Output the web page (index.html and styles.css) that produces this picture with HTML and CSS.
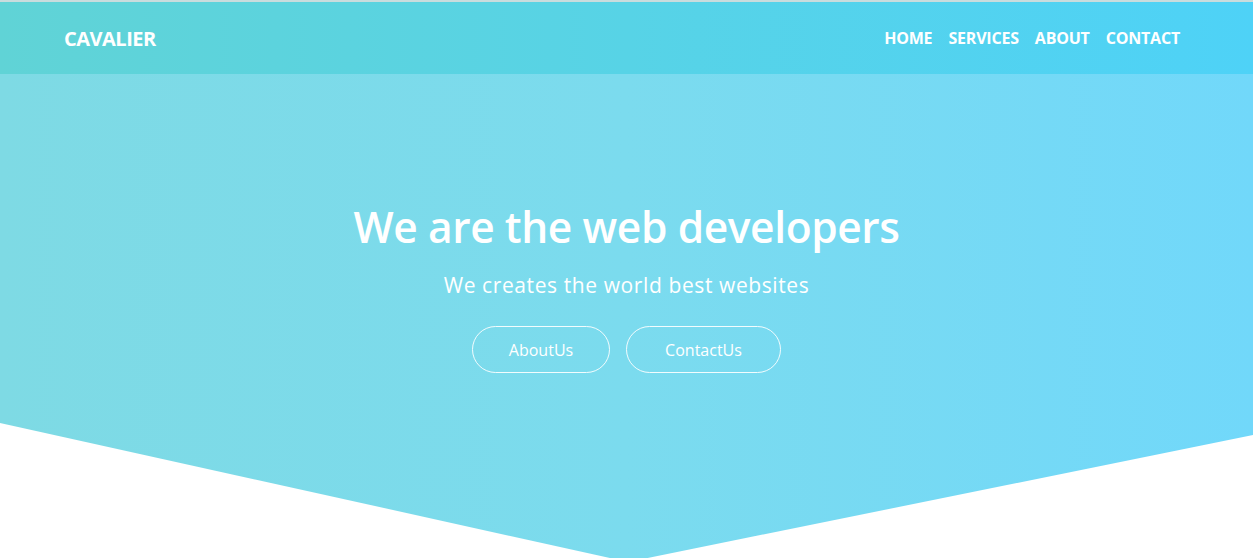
FILE: index.html
```html
<!DOCTYPE html>
<html lang="en">
<head>
<meta charset="utf-8">
<title>Cavalier</title>
<link rel="stylesheet" href="styles.css">
</head>
<body>
<div class="topline"></div>
<section class="hero">
  <header class="header">
    <div class="logo">CAVALIER</div>
    <nav class="nav">
      <a href="#">HOME</a>
      <a href="#">SERVICES</a>
      <a href="#">ABOUT</a>
      <a href="#">CONTACT</a>
    </nav>
  </header>
  <div class="content">
    <h1 class="title">We are the web developers</h1>
    <p class="subtitle">We creates the world best websites</p>
    <div class="buttons">
      <a href="#" class="btn btn-about">AboutUs</a>
      <a href="#" class="btn btn-contact">ContactUs</a>
    </div>
  </div>
</section>
</body>
</html>
```
FILE: styles.css
```css
* { box-sizing: border-box; }
html, body { margin: 0; padding: 0; background: #ffffff; overflow: hidden; }
body { font-family: "Open Sans", "DejaVu Sans", sans-serif; color: #fff; }
.topline { height: 2px; background: #c9dcdd; }
.hero {
  height: 556px;
  background: linear-gradient(to right, #7edae4 0%, #7bdbee 50%, #71d8fa 100%);
  clip-path: polygon(0 0, 100% 0, 100% 433px, 628px 560px, 0 421px);
  display: flex;
  flex-direction: column;
}
.header {
  height: 72px;
  background: linear-gradient(to right, #60d3d6 0%, #57d3e6 50%, #4ed2f7 100%);
  display: flex;
  align-items: center;
  justify-content: space-between;
  padding: 0 73px 0 64px;
}
.logo { font-size: 20px; font-weight: 700; letter-spacing: -0.5px; }
.nav { display: flex; gap: 16px; }
.nav a { color: #fff; text-decoration: none; font-size: 16px; font-weight: 700; letter-spacing: -0.2px; }
.content {
  display: flex;
  flex-direction: column;
  align-items: center;
  padding-top: 125px;
}
.title { margin: 0; font-size: 42.5px; font-weight: 600; line-height: 56px; letter-spacing: -0.4px; }
.subtitle { margin: 16px 0 0; font-size: 21px; font-weight: 400; line-height: 28px; letter-spacing: 0.6px; }
.buttons { display: flex; gap: 16px; margin-top: 27px; }
.btn {
  height: 47px;
  border: 1px solid rgba(255,255,255,0.9);
  border-radius: 24px;
  color: #fff;
  text-decoration: none;
  font-size: 16px;
  display: flex;
  align-items: center;
  justify-content: center;
}
.btn-about { width: 138px; }
.btn-contact { width: 155px; }
```
